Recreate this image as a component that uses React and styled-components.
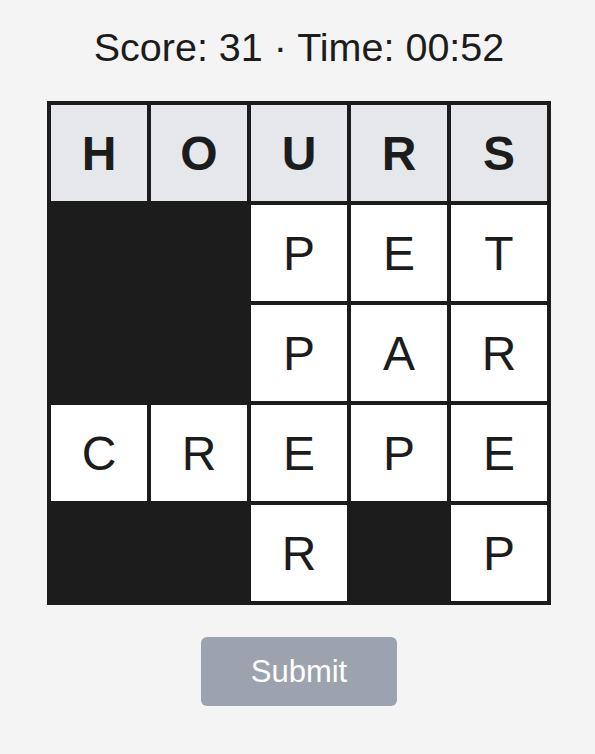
import React from 'react'
import styled, { createGlobalStyle } from 'styled-components'

const GlobalStyle = createGlobalStyle`
  html, body {
    margin: 0;
    padding: 0;
    background: #f4f4f4;
    font-family: "Liberation Sans", Arial, Helvetica, sans-serif;
    color: #1c1c1c;
  }
`

const Page = styled.div`
  display: flex;
  flex-direction: column;
  align-items: center;
  padding: 24px 0 0 3px;
`

const Status = styled.div`
  font-size: 39.5px;
  line-height: 46px;
  margin-bottom: 31px;
`

const Board = styled.div`
  display: grid;
  grid-template-columns: repeat(5, 100px);
  grid-auto-rows: 100px;
  border: 2px solid #1c1c1c;
`

const Cell = styled.div`
  box-sizing: border-box;
  border: 2px solid #1c1c1c;
  display: flex;
  align-items: center;
  justify-content: center;
  font-size: 48px;
  font-weight: ${p => (p.$head ? 700 : 400)};
  background: ${p => (p.$block ? '#1c1c1c' : p.$head ? '#e5e7eb' : '#ffffff')};
`

const SubmitButton = styled.button`
  margin-top: 32px;
  width: 196px;
  height: 69px;
  border: none;
  border-radius: 6px;
  background: #9ca3af;
  color: #ffffff;
  font-family: "Liberation Sans", Arial, Helvetica, sans-serif;
  font-size: 31px;
`

const rows = [
  'HOURS',
  '##PET',
  '##PAR',
  'CREPE',
  '##R#P',
]

export default function App() {
  return (
    <Page>
      <GlobalStyle />
      <Status>Score: 31 · Time: 00:52</Status>
      <Board>
        {rows.map((row, r) =>
          row.split('').map((ch, c) => (
            <Cell key={`${r}-${c}`} $head={r === 0} $block={ch === '#'}>
              {ch === '#' ? '' : ch}
            </Cell>
          ))
        )}
      </Board>
      <SubmitButton>Submit</SubmitButton>
    </Page>
  )
}
